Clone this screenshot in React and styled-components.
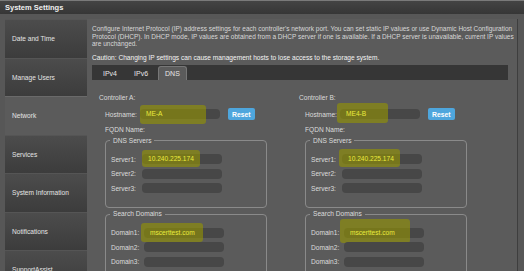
import React from "react";
import styled, { createGlobalStyle } from "styled-components";

const Global = createGlobalStyle`
  html, body {
    margin: 0;
    background: #575757;
    font-family: "Liberation Sans", Arial, sans-serif;
    color: #dcdcdc;
  }
`;

const TitleBar = styled.div`
  height: 13px;
  border-top: 1px solid #7a7a7a;
  background: linear-gradient(#444, #363636);
  color: #f0f0f0;
  font-weight: bold;
  font-size: 7.5px;
  line-height: 13px;
  padding-left: 5px;
`;

const Main = styled.div`
  display: flex;
  padding: 5px 0 0 5px;
  height: 252px;
  overflow: hidden;
`;

const Sidebar = styled.div`
  width: 82px;
  display: flex;
  flex-direction: column;
  flex-shrink: 0;
`;

const NavItem = styled.div`
  height: 38.5px;
  flex-shrink: 0;
  box-sizing: border-box;
  display: flex;
  align-items: center;
  padding-left: 7px;
  font-size: 6.6px;
  color: #e4e4e4;
  border-top: 1px solid ${(p) => (p.$active ? "#6a6a6a" : "#555")};
  background: ${(p) =>
    p.$active ? "#5b5b5b" : "linear-gradient(#4c4c4c, #3c3c3c)"};
`;

const Content = styled.div`
  flex: 1;
  background: #5b5b5b;
  border-right: 1px solid #3e3e3e;
  margin-right: 9px;
  padding: 6px 3px 0 5px;
  font-size: 6.6px;
`;

const Intro = styled.p`
  margin: 0;
  line-height: 7.6px;
  color: #d8d8d8;
  white-space: nowrap;
  font-size: 6.5px;
`;

const Caution = styled.p`
  margin: 6px 0 0;
  color: #f4f4f4;
`;

const TabBar = styled.div`
  margin: 4px 6px 0 0;
  height: 15px;
  background: #363636;
  display: flex;
  align-items: flex-end;
  padding-left: 4px;
  gap: 3px;
`;

const Tab = styled.div`
  height: 13px;
  padding: 0 6px;
  font-size: 7px;
  line-height: 13px;
  color: #e6e6e6;
  border-radius: 3px 3px 0 0;
  background: ${(p) => (p.$active ? "#5b5b5b" : "transparent")};
  border: 1px solid ${(p) => (p.$active ? "#777" : "transparent")};
  border-bottom: none;
`;

const Columns = styled.div`
  display: grid;
  grid-template-columns: 200px 200px;
  padding: 13px 0 0 7px;
`;

const Column = styled.div`
  display: flex;
  flex-direction: column;
`;

const Heading = styled.div`
  height: 10px;
  line-height: 10px;
  margin-bottom: 4px;
`;

const Row = styled.div`
  display: flex;
  align-items: center;
  height: 15px;
  padding-left: 6px;
  white-space: nowrap;
`;

const Label = styled.span`
  width: ${(p) => p.$w}px;
  flex-shrink: 0;
  white-space: nowrap;
`;

const Field = styled.div`
  position: relative;
  width: 80px;
  height: 10px;
  border-radius: 4px;
  background: #474747;
`;

const Value = styled.span`
  position: relative;
  left: 6px;
  line-height: 10px;
  color: #eaea3c;
`;

const Mark = styled.span`
  position: absolute;
  background: rgba(150, 150, 0, 0.6);
  border-radius: 3px;
  filter: blur(0.4px);
`;

const ResetButton = styled.button`
  margin-left: 8px;
  height: 12px;
  padding: 0 4px;
  border: none;
  border-radius: 2px;
  background: #4ea6dd;
  color: #fff;
  font-family: inherit;
  font-weight: bold;
  font-size: 6.8px;
`;

const Group = styled.fieldset`
  margin: ${(p) => p.$top}px 0 0 6px;
  width: 162px;
  box-sizing: border-box;
  border: 1px solid #8a8a8a;
  border-radius: 4px;
  padding: ${(p) => p.$pad};
  min-width: 0;
`;

const Legend = styled.legend`
  padding: 0 3px;
  margin-left: -1px;
  font-size: 6.6px;
  line-height: 8px;
`;

const GroupRow = styled.div`
  display: flex;
  align-items: center;
  height: 14.5px;
`;

function Input({ value, mark }) {
  return (
    <Field>
      {mark && (
        <Mark
          style={{
            left: mark[0],
            top: mark[1],
            width: mark[2],
            height: mark[3],
          }}
        />
      )}
      {value && <Value>{value}</Value>}
    </Field>
  );
}

function Controller({ name, host, marks }) {
  return (
    <Column>
      <Heading>Controller {name}:</Heading>
      <Row>
        <Label $w={35}>Hostname:</Label>
        <Input value={host} mark={marks.host} />
        <ResetButton>Reset</ResetButton>
      </Row>
      <Row>
        <Label $w={35}>FQDN Name:</Label>
      </Row>
      <Group $top={0} $pad="7px 0 12px 5px">
        <Legend>DNS Servers</Legend>
        <GroupRow>
          <Label $w={31}>Server1:</Label>
          <Input value="10.240.225.174" mark={marks.server} />
        </GroupRow>
        <GroupRow>
          <Label $w={31}>Server2:</Label>
          <Input />
        </GroupRow>
        <GroupRow>
          <Label $w={31}>Server3:</Label>
          <Input />
        </GroupRow>
      </Group>
      <Group $top={2} $pad="7px 0 6px 5px">
        <Legend>Search Domains</Legend>
        <GroupRow>
          <Label $w={33}>Domain1:</Label>
          <Input value="mscerttest.com" mark={marks.domain} />
        </GroupRow>
        <GroupRow>
          <Label $w={33}>Domain2:</Label>
          <Input />
        </GroupRow>
        <GroupRow>
          <Label $w={33}>Domain3:</Label>
          <Input />
        </GroupRow>
      </Group>
    </Column>
  );
}

const navItems = [
  "Date and Time",
  "Manage Users",
  "Network",
  "Services",
  "System Information",
  "Notifications",
  "SupportAssist",
];

export default function App() {
  return (
    <>
      <Global />
      <TitleBar>System Settings</TitleBar>
      <Main>
        <Sidebar>
          {navItems.map((item) => (
            <NavItem key={item} $active={item === "Network"}>
              {item}
            </NavItem>
          ))}
        </Sidebar>
        <Content>
          <Intro>
            Configure Internet Protocol (IP) address settings for each
            controller's network port. You can set static IP values or use
            Dynamic Host Configuration
            <br />
            Protocol (DHCP). In DHCP mode, IP values are obtained from a DHCP
            server if one is available. If a DHCP server is unavailable, current
            IP values
            <br />
            are unchanged.
          </Intro>
          <Caution>
            Caution: Changing IP settings can cause management hosts to lose
            access to the storage system.
          </Caution>
          <TabBar>
            <Tab>IPv4</Tab>
            <Tab>IPv6</Tab>
            <Tab $active>DNS</Tab>
          </TabBar>
          <Columns>
            <Controller
              name="A"
              host="ME-A"
              marks={{
                host: [0, -4, 66, 19],
                server: [0, -4, 58, 17],
                domain: [-3, -5, 62, 19],
              }}
            />
            <Controller
              name="B"
              host="ME4-B"
              marks={{
                host: [-3, -6, 51, 20],
                server: [-3, -5, 61, 18],
                domain: [-4, -9, 70, 24],
              }}
            />
          </Columns>
        </Content>
      </Main>
    </>
  );
}
